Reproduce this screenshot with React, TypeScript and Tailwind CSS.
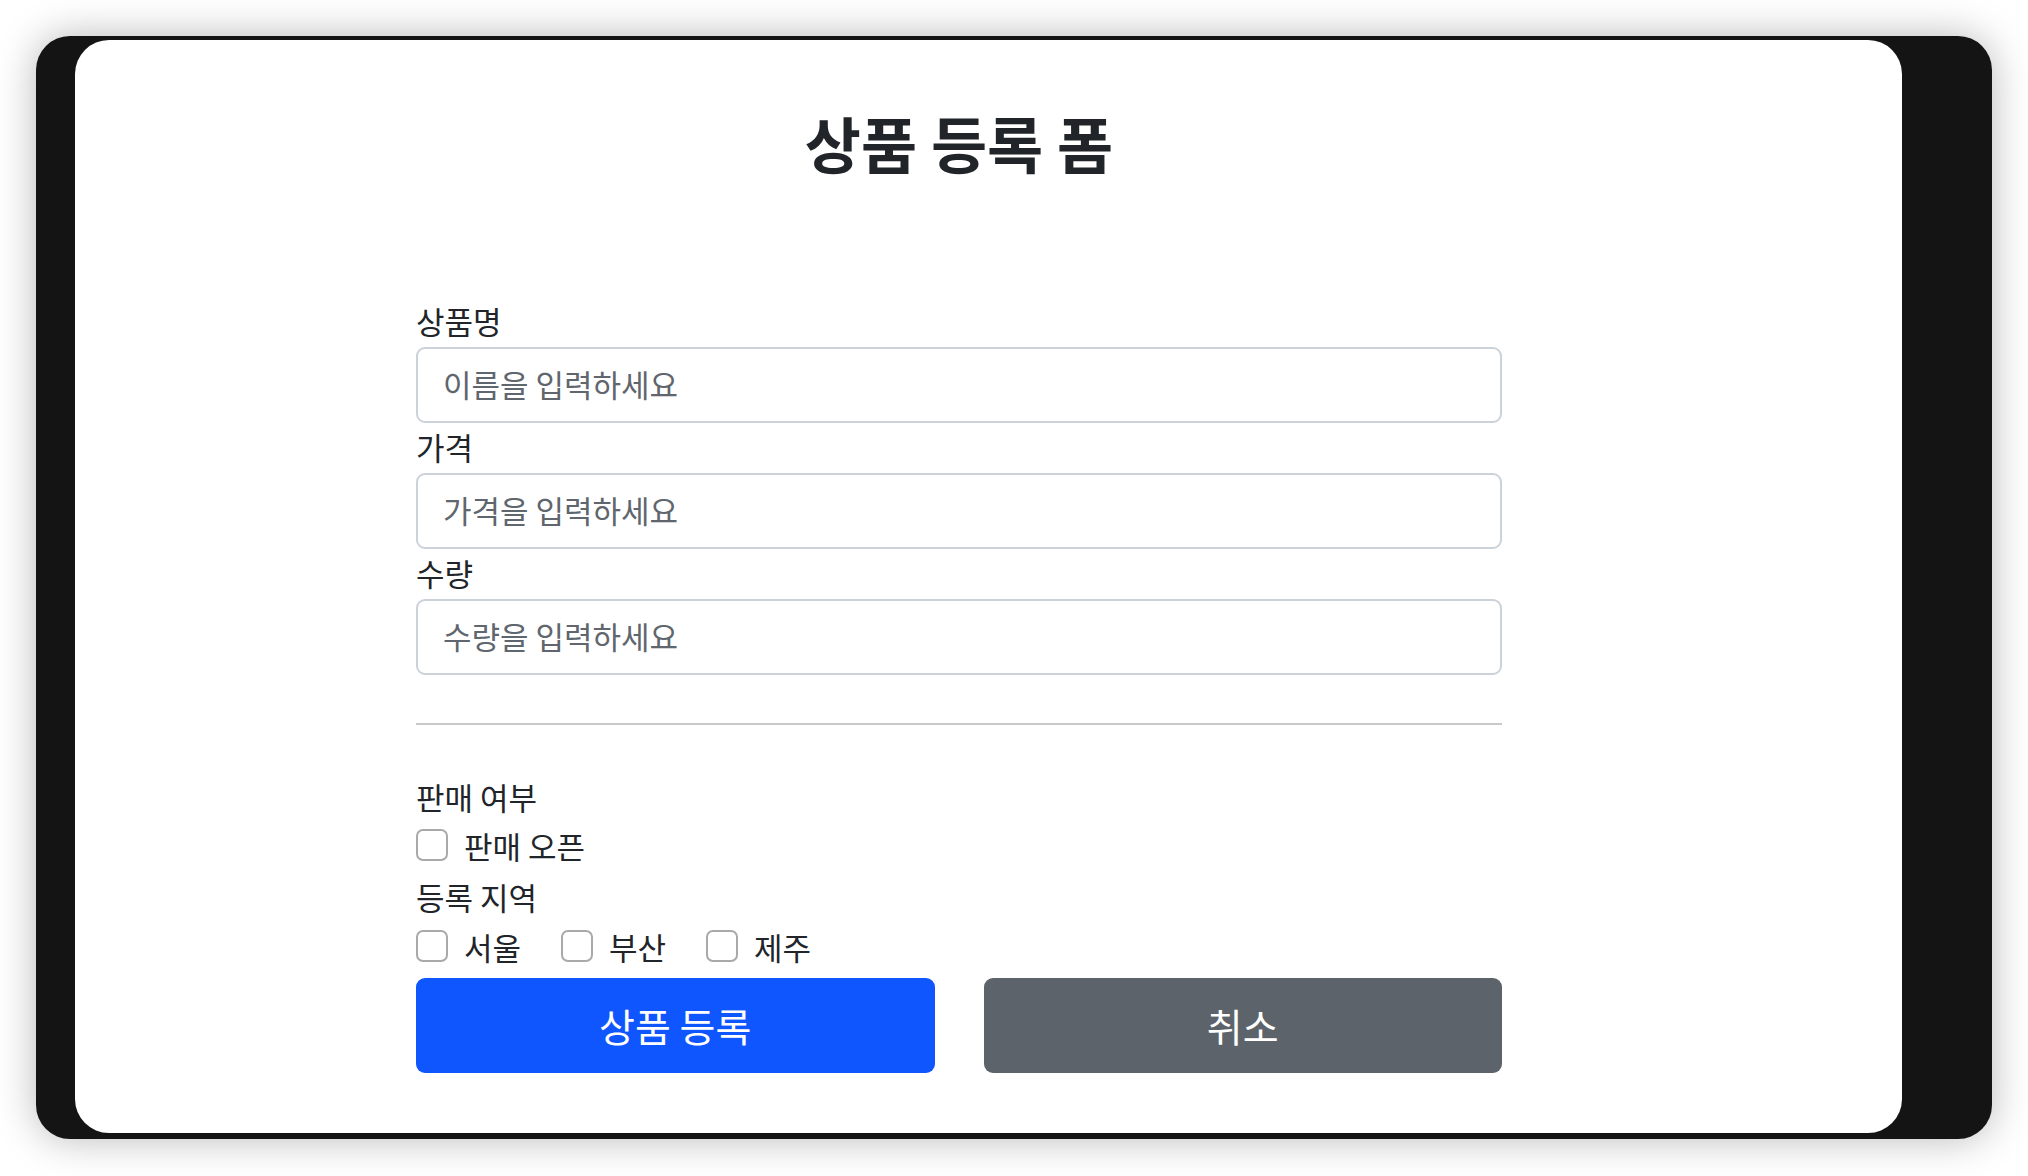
import React from "react";

const font = { fontFamily: '"Noto Sans CJK KR", "Noto Sans", sans-serif' };

function Field({ label, placeholder }: { label: string; placeholder: string }) {
  return (
    <div className="flex flex-col">
      <label className="h-[50px] flex items-center pb-[3px] text-[31px] font-normal leading-none text-[#212529]">{label}</label>
      <input
        placeholder={placeholder}
        className="h-[76px] w-full rounded-[9px] border-2 border-[#ccd2da] bg-white px-[25px] pb-[3px] text-[31px] text-[#212529] outline-none placeholder:text-[#5f666d]"
      />
    </div>
  );
}

function Check({ label, className = "" }: { label: string; className?: string }) {
  return (
    <label className={`flex items-center gap-[16px] ${className}`}>
      <span className="block h-[32px] w-[32px] rounded-[7px] border-2 border-[#a9a9a9] bg-white" />
      <span className="text-[31px] font-normal leading-none text-[#212529]">{label}</span>
    </label>
  );
}

export default function App() {
  return (
    <div className="h-[1176px] w-[2028px] bg-white p-[36px]" style={font}>
      <div className="h-[1103px] w-[1956px] rounded-[34px] bg-[#141414] pt-[4px] pl-[39px] pr-[90px] pb-[6px] shadow-[0_0_40px_rgba(0,0,0,0.28)]">
        <div className="h-[1093px] w-[1827px] rounded-[34px] bg-white pl-[341px]">
          <div className="flex w-[1086px] flex-col">
            <h1 className="mt-[68px] h-[70px] text-center text-[61px] font-bold leading-[70px] text-[#212529]">상품 등록 폼</h1>
            <div className="mt-[119px] flex flex-col">
              <Field label="상품명" placeholder="이름을 입력하세요" />
              <Field label="가격" placeholder="가격을 입력하세요" />
              <Field label="수량" placeholder="수량을 입력하세요" />
            </div>
            <div className="mt-[48px] h-[2px] w-full bg-[#c9c9c9]" />
            <div className="mt-[46px] flex h-[50px] items-center text-[31px] font-normal leading-none text-[#212529]">판매 여부</div>
            <div className="flex h-[48px] items-center">
              <Check label="판매 오픈" />
            </div>
            <div className="flex h-[54px] items-center text-[31px] font-normal leading-none text-[#212529]">등록 지역</div>
            <div className="flex h-[46px] items-center gap-[40px]">
              <Check label="서울" />
              <Check label="부산" />
              <Check label="제주" />
            </div>
            <div className="mt-[9px] grid grid-cols-2 gap-[49px]">
              <button className="h-[95px] rounded-[9px] bg-[#1056fe] text-[39px] text-white">상품 등록</button>
              <button className="h-[95px] rounded-[9px] bg-[#5c636a] text-[39px] text-white">취소</button>
            </div>
          </div>
        </div>
      </div>
    </div>
  );
}
